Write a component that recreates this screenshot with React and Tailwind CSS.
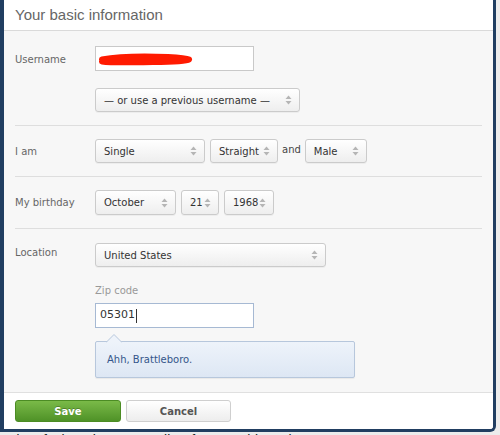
import React from "react";

const font = { fontFamily: '"DejaVu Sans", Verdana, sans-serif' };

function Arrows() {
  return (
    <svg width="7" height="10" viewBox="0 0 7 10" className="shrink-0">
      <path d="M3.5 0.5 L6.5 4 L0.5 4 Z" fill="#b5b5b5" />
      <path d="M3.5 9.5 L6.5 6 L0.5 6 Z" fill="#b5b5b5" />
    </svg>
  );
}

function Select({ children, className = "" }) {
  return (
    <div
      className={
        "flex h-[24px] items-center justify-between rounded-[3px] border border-[#cbcbcb] bg-gradient-to-b from-white to-[#eeeeee] pl-[8px] pr-[7px] text-[10px] text-[#333] shadow-[0_1px_0_rgba(0,0,0,0.04)] " +
        className
      }
    >
      <span className="whitespace-nowrap">{children}</span>
      <Arrows />
    </div>
  );
}

export default function App() {
  return (
    <div className="relative h-[435px] w-[500px] overflow-hidden bg-[#ececec]" style={font}>
      <div className="flex h-[432px] w-[496px] flex-col overflow-hidden rounded-br-[6px] border-b-[3px] border-l-4 border-r-[3px] border-[#213e61] bg-[#f7f7f7]">
        {/* Header */}
        <div className="flex h-[31px] shrink-0 items-center border-b border-[#dadada] bg-white pl-[11px]">
          <span
            className="text-[15px] text-[#666]"
            style={{ fontFamily: '"Liberation Sans", Arial, sans-serif' }}
          >
            Your basic information
          </span>
        </div>

        {/* Body */}
        <div className="flex-1 px-[11px]">
          <div className="border-b border-[#dedede] pb-[13px] pt-[15px]">
            <div className="flex">
              <div className="w-[80px] shrink-0 pt-[6px] text-[10px] text-[#666]">Username</div>
              <div className="flex flex-col gap-[17px]">
                <div className="relative h-[25px] w-[159px] border border-[#c9c9c9] bg-white">
                  <svg className="absolute left-[2px] top-[6px]" width="96" height="14" viewBox="0 0 96 14">
                    <path
                      d="M4 6.5 C20 3.5 45 3 70 4 C80 4.5 88 5 91 6.5 C88 8.5 75 9 55 9 C35 9.3 15 10 4 8.5"
                      stroke="#ff1a00"
                      strokeWidth="6"
                      strokeLinecap="round"
                      strokeLinejoin="round"
                      fill="#ff1a00"
                    />
                  </svg>
                </div>
                <Select className="w-[205px]">— or use a previous username —</Select>
              </div>
            </div>
          </div>

          <div className="border-b border-[#dedede] pb-[13px] pt-[13px]">
            <div className="flex items-center">
              <div className="w-[80px] shrink-0 text-[10px] text-[#666]">I am</div>
              <div className="flex items-center gap-[5px]">
                <Select className="w-[110px]">Single</Select>
                <Select className="w-[68px]">Straight</Select>
                <span className="-mx-[1px] -mt-[3px] text-[10px] text-[#444]">and</span>
                <Select className="w-[62px]">Male</Select>
              </div>
            </div>
          </div>

          <div className="border-b border-[#dedede] pb-[13px] pt-[13px]">
            <div className="flex items-center">
              <div className="w-[80px] shrink-0 text-[10px] text-[#666]">My birthday</div>
              <div className="flex items-center gap-[5px]">
                <Select className="h-[25px] w-[81px]">October</Select>
                <Select className="h-[25px] w-[38px]">21</Select>
                <Select className="h-[25px] w-[50px]">1968</Select>
              </div>
            </div>
          </div>

          <div className="pt-[14px]">
            <div className="flex">
              <div className="w-[80px] shrink-0 pt-[2px] text-[10px] text-[#666]">Location</div>
              <div className="flex flex-col">
                <Select className="w-[231px]">United States</Select>
                <div className="mt-[16px] text-[10px] text-[#999]">Zip code</div>
                <div className="mt-[5px] flex h-[25px] w-[159px] items-center border border-[#a6b9d3] bg-white pl-[4px] text-[11px] text-[#333]">
                  05301<span className="ml-[1px] inline-block h-[14px] w-px bg-[#333]" />
                </div>
                <div className="relative mt-[13px] flex h-[37px] w-[260px] items-center rounded-[2px] border border-[#b7c7dc] bg-gradient-to-b from-[#eef3fa] to-[#dde7f4] pl-[11px] text-[10px] text-[#34568a] shadow-[0_1px_1px_rgba(0,0,0,0.06)]">
                  <svg className="absolute -top-[8px] left-[10px]" width="16" height="9" viewBox="0 0 16 9">
                    <path d="M0 8.5 L8 0.5 L16 8.5" fill="#eef3fa" stroke="#b7c7dc" strokeWidth="1" />
                  </svg>
                  Ahh, Brattleboro.
                </div>
              </div>
            </div>
          </div>
        </div>

        {/* Footer */}
        <div className="flex h-[37px] shrink-0 items-center gap-[5px] border-t border-[#e0e0e0] bg-white pl-[11px]">
          <div className="flex h-[22px] w-[106px] items-center justify-center rounded-[3px] border border-[#4c8c24] bg-gradient-to-b from-[#7aba48] to-[#4f9227] text-[10px] font-bold text-white [text-shadow:0_-1px_0_rgba(0,0,0,0.25)]">
            Save
          </div>
          <div className="flex h-[22px] w-[105px] items-center justify-center rounded-[3px] border border-[#cfcfcf] bg-gradient-to-b from-white to-[#ededed] text-[10px] font-bold text-[#555]">
            Cancel
          </div>
        </div>
      </div>
      <div
        className="-ml-[3px] whitespace-nowrap text-[14px] leading-[16px] text-[#222]"
        style={{ fontFamily: '"Liberation Sans", Arial, sans-serif' }}
      >
        ced. Lefty learning ENFP Libra for more hints about
      </div>
    </div>
  );
}
